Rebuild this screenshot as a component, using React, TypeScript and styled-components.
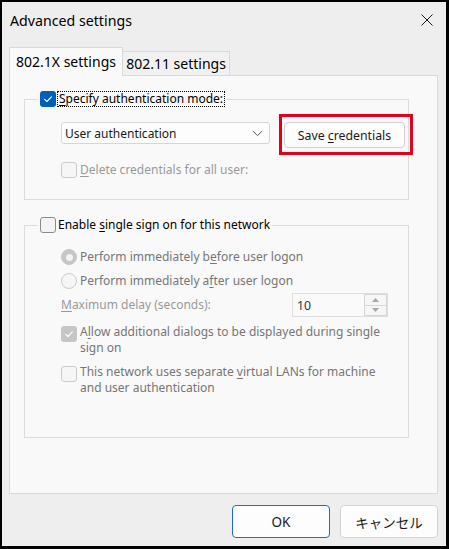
import React from "react";
import styled, { createGlobalStyle } from "styled-components";

const Global = createGlobalStyle`
  html, body { margin: 0; padding: 0; background: #000; }
  body {
    width: 449px; height: 549px; overflow: hidden;
    font-family: "Noto Sans", "Noto Sans CJK JP", sans-serif;
  }
`;

const Screen = styled.div`
  width: 449px;
  height: 549px;
  box-sizing: border-box;
  padding: 2px 3px 3px 2px;
  background: #000;
  display: flex;
`;

const Window = styled.div`
  flex: 1;
  background: #eeeeee;
  display: flex;
  flex-direction: column;
  padding: 0 8px 8px 7px;
  box-sizing: border-box;
`;

const TitleBar = styled.div`
  height: 36px;
  margin: 0 -8px 0 -7px;
  padding-left: 8px;
  display: flex;
  align-items: center;
  justify-content: space-between;
`;

const Title = styled.div`
  font-size: 14.2px;
  color: #000;
`;

const CloseButton = styled.div`
  width: 38px;
  height: 36px;
  display: flex;
  align-items: center;
  justify-content: center;
`;

const TabStrip = styled.div`
  margin-top: 9px;
  margin-bottom: -1px;
  display: flex;
  align-items: flex-end;
  position: relative;
  z-index: 1;
`;

const Tab = styled.div<{ $active?: boolean }>`
  box-sizing: border-box;
  width: ${(p) => (p.$active ? "114px" : "108px")};
  height: ${(p) => (p.$active ? "29px" : "25px")};
  margin-left: ${(p) => (p.$active ? "0" : "-1px")};
  border: 1px solid #d9d9d9;
  border-bottom: ${(p) => (p.$active ? "none" : "1px solid #d9d9d9")};
  background: ${(p) => (p.$active ? "#f9f9f9" : "#f1f1f1")};
  display: flex;
  align-items: center;
  justify-content: center;
  font-size: 14px;
  color: #000;
  padding-bottom: ${(p) => (p.$active ? "2px" : "0")};
`;

const Panel = styled.div`
  flex: 1;
  background: #f9f9f9;
  border: 1px solid #d9d9d9;
  padding: 15px 0 0 14px;
  display: flex;
  flex-direction: column;
  gap: 17px;
`;

const Group = styled.fieldset`
  margin: 0;
  padding: 0;
  min-width: 0;
  width: 385px;
  box-sizing: border-box;
  border: 1px solid #dcdcdc;
`;

const Legend = styled.legend`
  margin-left: 13px;
  padding: 0 2px;
  display: flex;
  align-items: center;
  gap: 2px;
  height: 16px;
`;

const GroupBody = styled.div<{ $pt: number; $pb: number }>`
  padding: ${(p) => p.$pt}px 20px ${(p) => p.$pb}px 36px;
  display: flex;
  flex-direction: column;
`;

const Label = styled.span<{ $tone?: "normal" | "dim" | "faint"; $focus?: boolean }>`
  font-size: 12px;
  white-space: nowrap;
  color: ${(p) => (p.$tone === "dim" ? "#767676" : p.$tone === "faint" ? "#999999" : "#000")};
  outline: ${(p) => (p.$focus ? "1px dotted #000" : "none")};
  padding: ${(p) => (p.$focus ? "0 1px" : "0")};
  line-height: ${(p) => (p.$focus ? "14px" : "16px")};
  u { text-decoration-thickness: 1px; text-underline-offset: 2px; }
`;

const Box = styled.span<{ $checked?: boolean; $disabled?: boolean }>`
  flex: none;
  width: 16px;
  height: 16px;
  box-sizing: border-box;
  border-radius: 3px;
  display: inline-flex;
  align-items: center;
  justify-content: center;
  border: 1px solid
    ${(p) => (p.$checked ? "transparent" : p.$disabled ? "#cbcbcb" : "#8b8b8b")};
  background: ${(p) =>
    p.$checked ? (p.$disabled ? "#c6c6c6" : "#005fb8") : p.$disabled ? "#f6f6f6" : "#f4f4f4"};
`;

const RadioDot = styled.span<{ $selected?: boolean }>`
  flex: none;
  width: 16px;
  height: 16px;
  box-sizing: border-box;
  border-radius: 50%;
  display: inline-flex;
  align-items: center;
  justify-content: center;
  border: 1px solid ${(p) => (p.$selected ? "#c6c6c6" : "#cbcbcb")};
  background: ${(p) => (p.$selected ? "#c6c6c6" : "#f6f6f6")};
  &::after {
    content: "";
    display: ${(p) => (p.$selected ? "block" : "none")};
    width: 7px;
    height: 7px;
    border-radius: 50%;
    background: #f3f3f3;
  }
`;

const Row = styled.div<{ $top?: boolean; $mt?: number }>`
  display: flex;
  align-items: ${(p) => (p.$top ? "flex-start" : "center")};
  gap: 3px;
  margin-top: ${(p) => p.$mt ?? 0}px;
  min-height: 16px;
  & > ${Box} { margin-top: ${(p) => (p.$top ? "2px" : "0")}; }
`;

const ControlRow = styled.div`
  display: flex;
  align-items: flex-start;
`;

const Select = styled.div`
  flex: none;
  width: 209px;
  height: 22px;
  box-sizing: border-box;
  border: 1px solid #d6d6d6;
  border-radius: 3px;
  background: #fdfdfd;
  display: flex;
  align-items: center;
  justify-content: space-between;
  padding: 0 6px 0 3px;
  font-size: 12px;
  color: #1a1a1a;
`;

const PushButton = styled.div`
  flex: none;
  position: relative;
  margin-left: 14px;
  width: 121px;
  height: 26px;
  box-sizing: border-box;
  border: 1px solid #d0d0d0;
  border-radius: 4px;
  background: #fdfdfd;
  display: flex;
  align-items: center;
  justify-content: center;
  font-size: 12.3px;
  color: #1a1a1a;
  u { text-decoration-thickness: 1px; text-underline-offset: 2px; }
`;

const Highlight = styled.span`
  position: absolute;
  top: -9px;
  left: -6px;
  right: -9px;
  bottom: -8px;
  border: 3px solid #e2001a;
  pointer-events: none;
`;

const RadioRow = styled.div<{ $mt?: number }>`
  display: flex;
  align-items: center;
  gap: 3px;
  height: 20px;
  margin-top: ${(p) => p.$mt ?? 0}px;
`;

const DelayRow = styled.div`
  display: flex;
  align-items: center;
  justify-content: space-between;
  margin-top: 2px;
  height: 24px;
`;

const Spinner = styled.div`
  width: 96px;
  height: 24px;
  box-sizing: border-box;
  border: 1px solid #dedede;
  background: #fafafa;
  display: flex;
  align-items: stretch;
`;

const SpinValue = styled.div`
  flex: 1;
  display: flex;
  align-items: center;
  padding-left: 4px;
  font-size: 12.3px;
  color: #333;
`;

const SpinButtons = styled.div`
  width: 21px;
  display: flex;
  flex-direction: column;
  border: 1px solid #d6d6d6;
  background: #f6f6f6;
`;

const SpinHalf = styled.div<{ $bottom?: boolean }>`
  flex: 1;
  display: flex;
  align-items: center;
  justify-content: center;
  border-top: ${(p) => (p.$bottom ? "1px solid #d6d6d6" : "none")};
`;

const Footer = styled.div`
  margin-top: 11px;
  display: flex;
  justify-content: flex-end;
  gap: 10px;
`;

const DialogButton = styled.div<{ $primary?: boolean }>`
  width: 98px;
  height: 33px;
  box-sizing: border-box;
  border: 1px solid ${(p) => (p.$primary ? "#1c6fc4" : "#d3d3d3")};
  border-radius: 4px;
  background: #fdfdfd;
  display: flex;
  align-items: center;
  justify-content: center;
  font-size: 13.5px;
  color: #1a1a1a;
`;

const Check = ({ checked, disabled }: { checked?: boolean; disabled?: boolean }) => (
  <Box $checked={checked} $disabled={disabled}>
    {checked && (
      <svg width="12" height="12" viewBox="0 0 12 12">
        <path d="M2.6 6.3 L4.9 8.5 L9.4 3.8" fill="none" stroke="#fff" strokeWidth="1.1" strokeLinecap="round" strokeLinejoin="round" />
      </svg>
    )}
  </Box>
);

export default function App() {
  return (
    <>
      <Global />
      <Screen>
        <Window>
          <TitleBar>
            <Title>Advanced settings</Title>
            <CloseButton>
              <svg width="12" height="12" viewBox="0 0 12 12">
                <path d="M0.5 0.5 L11.5 11.5 M11.5 0.5 L0.5 11.5" stroke="#1a1a1a" strokeWidth="1" />
              </svg>
            </CloseButton>
          </TitleBar>

          <TabStrip>
            <Tab $active>802.1X settings</Tab>
            <Tab>802.11 settings</Tab>
          </TabStrip>

          <Panel>
            <Group>
              <Legend>
                <Check checked />
                <Label $focus>
                  <u>S</u>pecify authentication mode:
                </Label>
              </Legend>
              <GroupBody $pt={15} $pb={21}>
                <ControlRow>
                  <Select>
                    <span>User authentication</span>
                    <svg width="11" height="7" viewBox="0 0 11 7">
                      <path d="M0.8 1 L5.5 5.6 L10.2 1" fill="none" stroke="#5a5a5a" strokeWidth="1" />
                    </svg>
                  </Select>
                  <PushButton>
                    <span>
                      Save <u>c</u>redentials
                    </span>
                    <Highlight />
                  </PushButton>
                </ControlRow>
                <Row $mt={14}>
                  <Check disabled />
                  <Label $tone="faint">
                    <u>D</u>elete credentials for all user:
                  </Label>
                </Row>
              </GroupBody>
            </Group>

            <Group>
              <Legend>
                <Check />
                <Label>
                  Enable <u>s</u>ingle sign on for this network
                </Label>
              </Legend>
              <GroupBody $pt={14} $pb={41}>
                <RadioRow>
                  <RadioDot $selected />
                  <Label $tone="dim">
                    Perform immediately b<u>e</u>fore user logon
                  </Label>
                </RadioRow>
                <RadioRow $mt={4}>
                  <RadioDot />
                  <Label $tone="dim">
                    Perform immediately a<u>f</u>ter user logon
                  </Label>
                </RadioRow>
                <DelayRow>
                  <Label $tone="faint">
                    <u>M</u>aximum delay (seconds):
                  </Label>
                  <Spinner>
                    <SpinValue>10</SpinValue>
                    <SpinButtons>
                      <SpinHalf>
                        <svg width="7" height="4" viewBox="0 0 7 4">
                          <path d="M0 4 L3.5 0 L7 4 Z" fill="#a8a8a8" />
                        </svg>
                      </SpinHalf>
                      <SpinHalf $bottom>
                        <svg width="7" height="4" viewBox="0 0 7 4">
                          <path d="M0 0 L3.5 4 L7 0 Z" fill="#a8a8a8" />
                        </svg>
                      </SpinHalf>
                    </SpinButtons>
                  </Spinner>
                </DelayRow>
                <Row $top $mt={7}>
                  <Check checked disabled />
                  <Label $tone="dim">
                    A<u>l</u>low additional dialogs to be displayed during single
                    <br />
                    sign on
                  </Label>
                </Row>
                <Row $top $mt={8}>
                  <Check disabled />
                  <Label $tone="dim">
                    This network uses separate <u>v</u>irtual LANs for machine
                    <br />
                    and user authentication
                  </Label>
                </Row>
              </GroupBody>
            </Group>
          </Panel>

          <Footer>
            <DialogButton $primary>OK</DialogButton>
            <DialogButton>キャンセル</DialogButton>
          </Footer>
        </Window>
      </Screen>
    </>
  );
}
